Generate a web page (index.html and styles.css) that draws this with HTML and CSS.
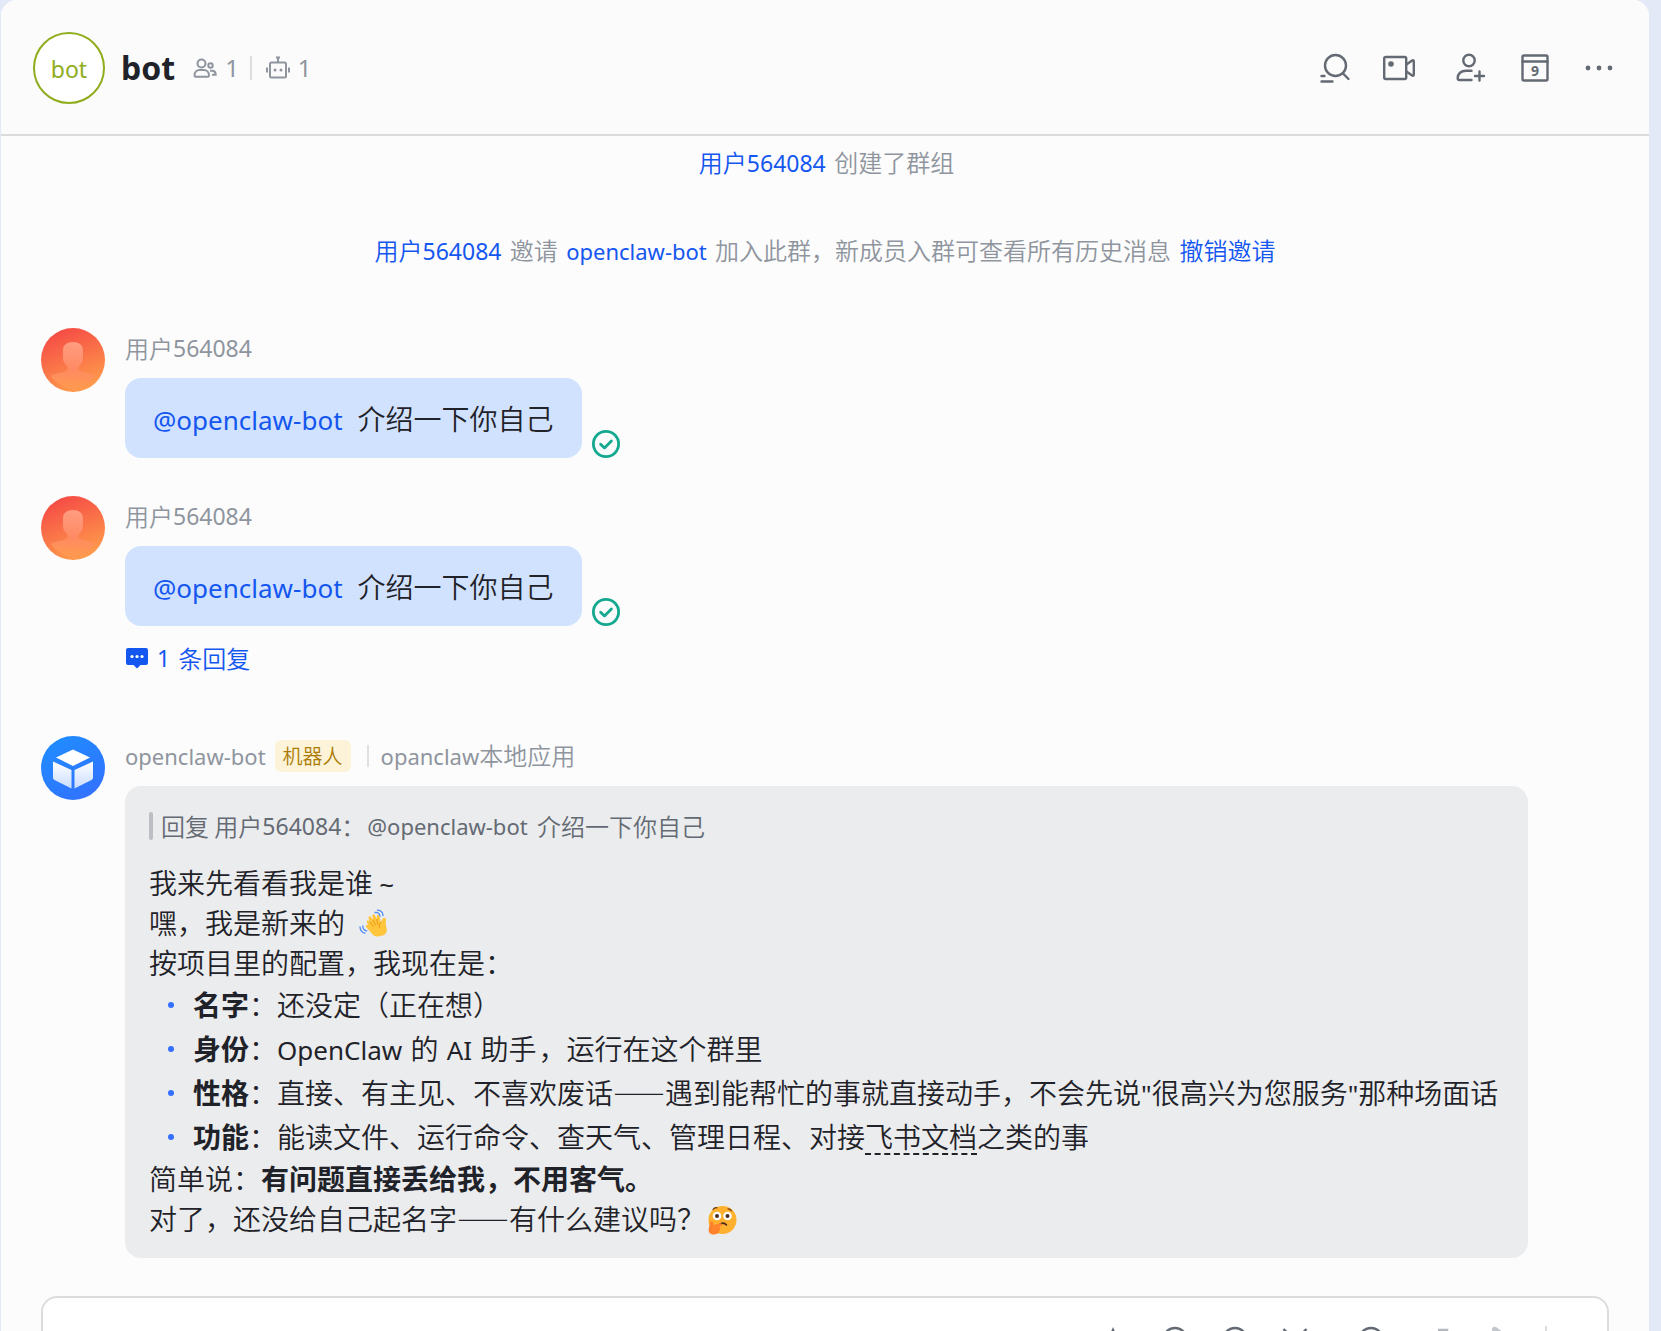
FILE: index.html
```html
<!DOCTYPE html>
<html lang="zh-CN">
<head>
<meta charset="utf-8">
<meta name="viewport" content="width=device-width, initial-scale=1">
<title>bot</title>
<link rel="stylesheet" href="styles.css">
</head>
<body>
<svg class="symbols" aria-hidden="true">
  <defs>
    <linearGradient id="warm" x1="0.3" y1="0" x2="0.7" y2="1">
      <stop offset="0" stop-color="#f54a45"/><stop offset="1" stop-color="#ff9f4c"/>
    </linearGradient>
    <linearGradient id="figure" x1="0" y1="0" x2="0" y2="1">
      <stop offset="0" stop-color="#ff9c80"/><stop offset="0.6" stop-color="#ff8a62"/><stop offset="1" stop-color="#ff9a50"/>
    </linearGradient>
    <linearGradient id="cool" x1="0.2" y1="0" x2="0.8" y2="1">
      <stop offset="0" stop-color="#1f8dff"/><stop offset="1" stop-color="#3370ff"/>
    </linearGradient>
    <linearGradient id="face" x1="0" y1="0" x2="0" y2="1">
      <stop offset="0" stop-color="#fff"/><stop offset="1" stop-color="#c9dcff"/>
    </linearGradient>
  </defs>
  <symbol id="person" viewBox="0 0 64 64">
    <circle cx="32" cy="32" r="32" fill="url(#warm)"/>
    <path fill="url(#figure)" d="M22 22c0-5 4-8 10-8s10 3 10 8v8c0 4-2 6-4 8-1 2-1 4 1 5 5 2 11 2 15 5a27 30 0 0 1-44 0c4-3 10-3 15-5 2-1 2-3 1-5-2-2-4-4-4-8z"/>
  </symbol>
  <symbol id="check" viewBox="0 0 28 28">
    <circle cx="14" cy="14" r="12.6" fill="none" stroke="#14a88f" stroke-width="2.8"/>
    <path d="M8.6 14.2l3.9 3.9 6.9-7" fill="none" stroke="#14a88f" stroke-width="2.8" stroke-linecap="round" stroke-linejoin="round"/>
  </symbol>
</svg>

<main class="panel">
  <header class="header">
    <div class="group-avatar">bot</div>
    <h1 class="title">bot</h1>
    <div class="counts">
      <button class="count" type="button" aria-label="群成员 1">
        <svg width="24" height="24" viewBox="0 0 24 24" fill="none" stroke="#8f959e" stroke-width="2" aria-hidden="true">
          <circle cx="8.5" cy="7.5" r="4"/><path d="M1.5 19.5c0-3.500 2.300-5.500 5-5.500h4.500c2.700 0 5 2 5 5.500 0 .8-.5 1.200-1.200 1.200H2.700c-.7 0-1.200-.4-1.200-1.200z"/>
          <circle cx="17.500" cy="9.500" r="2.200"/><path d="M17 14.700h2c2 0 3.700 1.500 3.700 4H19"/>
        </svg>
        1
      </button>
      <button class="count" type="button" aria-label="机器人 1">
        <svg width="24" height="24" viewBox="0 0 24 24" fill="none" stroke="#8f959e" stroke-width="2" aria-hidden="true">
          <rect x="4" y="6.500" width="16" height="15" rx="1.500"/><path d="M12 6.500V1.500M10 1.500h4M1 11.500v5M23 11.500v5"/>
          <circle cx="9" cy="14" r="1.500" fill="#8f959e" stroke="none"/><circle cx="15" cy="14" r="1.500" fill="#8f959e" stroke="none"/>
        </svg>
        1
      </button>
    </div>
    <nav class="actions" aria-label="群操作">
      <div class="action-group">
        <button class="action" type="button" aria-label="搜索">
          <svg viewBox="0 0 32 32" aria-hidden="true"><circle cx="16.500" cy="13.500" r="10.500"/><path d="M24 21.500l5.500 5.500M2.500 24h3M2.500 29.500H13.500"/></svg>
        </button>
        <button class="action" type="button" aria-label="视频会议">
          <svg viewBox="0 0 32 32" aria-hidden="true"><rect x="1.200" y="5" width="22" height="22" rx="1.500"/><path d="M23.500 12.500l5.500-4q1.800-.8 1.800 1v13q0 1.800-1.800 1l-5.500-4"/><circle cx="8" cy="12" r="2.800" fill="#646a73" stroke="none"/></svg>
        </button>
      </div>
      <div class="action-group">
        <button class="action" type="button" aria-label="添加成员">
          <svg viewBox="0 0 32 32" aria-hidden="true"><circle cx="14" cy="8.500" r="5.700"/><path d="M16.500 18.700H11c-5 0-8.300 3-8.300 7.500 0 1.300.5 1.800 1.700 1.800h12.100M24.500 19.500v9M20 24h9"/></svg>
        </button>
        <button class="action" type="button" aria-label="日历">
          <svg viewBox="0 0 32 32" aria-hidden="true"><rect x="3.500" y="3.500" width="25" height="25" rx="1.500"/><path d="M3.500 9.500h25"/><text x="16" y="24" text-anchor="middle">9</text></svg>
        </button>
        <button class="action" type="button" aria-label="更多">
          <svg viewBox="0 0 32 32" aria-hidden="true"><g fill="#646a73" stroke="none"><circle cx="5" cy="16" r="2.400"/><circle cx="16" cy="16" r="2.400"/><circle cx="27" cy="16" r="2.400"/></g></svg>
        </button>
      </div>
    </nav>
  </header>

  <section class="thread" aria-label="消息">
    <p class="notice"><a href="#user">用户<span class="num">564084</span></a> 创建了群组</p>
    <p class="notice"><a href="#user">用户<span class="num">564084</span></a> 邀请 <a class="latin" href="#bot">openclaw-bot</a> 加入此群，新成员入群可查看所有历史消息 <a href="#undo">撤销邀请</a></p>

    <article class="message">
      <svg class="avatar" aria-hidden="true"><use href="#person"/></svg>
      <div class="content">
        <div class="sender">用户<span class="num">564084</span></div>
        <div class="bubble-row">
          <p class="bubble own"><a class="latin" href="#bot">@openclaw-bot</a>介绍一下你自己</p>
          <svg class="read" role="img" aria-label="已读"><use href="#check"/></svg>
        </div>
      </div>
    </article>

    <article class="message">
      <svg class="avatar" aria-hidden="true"><use href="#person"/></svg>
      <div class="content">
        <div class="sender">用户<span class="num">564084</span></div>
        <div class="bubble-row">
          <p class="bubble own"><a class="latin" href="#bot">@openclaw-bot</a>介绍一下你自己</p>
          <svg class="read" role="img" aria-label="已读"><use href="#check"/></svg>
        </div>
        <a class="replies" href="#replies">
          <svg width="24" height="24" viewBox="0 0 24 24" aria-hidden="true"><path fill="#1456f0" d="M3 2h18q2 0 2 2v13q0 2-2 2h-5.500L12 22.500 8.500 19H3q-2 0-2-2V4q0-2 2-2z"/><g fill="#fff"><circle cx="7" cy="10.500" r="1.600"/><circle cx="12" cy="10.500" r="1.600"/><circle cx="17" cy="10.500" r="1.600"/></g></svg>
          <span class="num">1</span>
          <span>条回复</span>
        </a>
      </div>
    </article>

    <article class="message">
      <svg class="avatar" viewBox="0 0 64 64" aria-hidden="true">
        <circle cx="32" cy="32" r="32" fill="url(#cool)"/>
        <path fill="#fff" d="M32 13.500L49 21.500 32 30 15 21.500z"/>
        <path fill="url(#face)" d="M12 25.500L30.500 34V52.500L13.500 44q-1.500-.8-1.500-2.500zM52 25.500L33.500 34V52.500L50.500 44q1.500-.8 1.500-2.500z"/>
      </svg>
      <div class="content">
        <div class="sender">
          <span class="latin">openclaw-bot</span>
          <span class="tag">机器人</span>
          <span class="origin"><span class="latin">opanclaw</span>本地应用</span>
        </div>
        <div class="bubble reply">
          <blockquote class="quote">回复 用户<span class="num">564084</span>：<span class="latin gap">@openclaw-bot</span> 介绍一下你自己</blockquote>
          <p>我来先看看我是谁 <span class="latin">~</span></p>
          <p>嘿，我是新来的
            <svg class="emoji wave" viewBox="0 0 30 30" role="img" aria-label="挥手">
              <path fill="#ffc53d" d="M8 13.500c-1-1.600.8-3 2.100-1.600l1 1.200-1.500-3.500C8.800 7.500 11 6.500 12 8.200L14 11l-.7-4c-.3-2 2-2.600 2.700-.7l1.700 4 .2-3.300c.1-1.700 2.300-1.700 2.600 0l1.300 6.200 2-3.600c.9-1.500 3.500-1 3.200 1.300-.5 3.700-.2 4.600.6 8.300 1 5-2.600 8-6.600 7.500C15 30 12.500 23 7.500 18.500c-1.600-1.500-.2-3.200 1.500-2.400z"/>
              <path fill="none" stroke="#e8950c" stroke-width=".9" stroke-linecap="round" d="M11.100 13.100l3 4.400M14 11l2.500 5M17.700 10.300l1 5M21.800 13.200c-1.500 2-2 4-1.500 5.500"/>
              <path fill="none" stroke="#4e8cf7" stroke-width="1.300" stroke-linecap="round" d="M16 3.500c2.500-.5 4.500.8 5 3.500M18.500 1.200c3.200.2 5.300 2.300 5.500 5.300M3.800 17c0 3 1.400 4.500 4 4.800M1 18c.3 3.400 2 5.500 5 6.200"/>
            </svg>
          </p>
          <p>按项目里的配置，我现在是：</p>
          <ul>
            <li><b>名字</b>：还没定（正在想）</li>
            <li><b>身份</b>：<span class="latin">OpenClaw</span> <span class="gap">的</span> <span class="latin">AI</span> <span class="gap">助手</span>，运行在这个群里</li>
            <li><b>性格</b>：直接、有主见、不喜欢废话<span class="dash">——</span>遇到能帮忙的事就直接动手，不会先说<span class="latin">"</span>很高兴为您服务<span class="latin">"</span>那种场面话</li>
            <li><b>功能</b>：能读文件、运行命令、查天气、管理日程、对接<a class="term" href="#docs">飞书文档</a>之类的事</li>
          </ul>
          <p>简单说：<b>有问题直接丢给我，不用客气。</b></p>
          <p>对了，还没给自己起名字<span class="dash">——</span>有什么建议吗？<svg class="emoji think" viewBox="0 0 30 30" role="img" aria-label="思考">
              <circle cx="15.500" cy="15" r="14" fill="#ffb02e"/>
              <circle cx="10" cy="11" r="4.300" fill="#fff"/><circle cx="20.500" cy="11" r="4.300" fill="#fff"/>
              <circle cx="10" cy="11" r="2" fill="#4a2b20"/><circle cx="20.500" cy="11" r="2" fill="#4a2b20"/>
              <path fill="none" stroke="#6b3a12" stroke-width="1.200" stroke-linecap="round" d="M6 4.500c1-1.500 2.500-2 4-1.700M21 3.800c1.500 0 2.700.7 3.500 2"/>
              <path fill="none" stroke="#4a2b20" stroke-width="1.600" stroke-linecap="round" d="M12.500 20c2-2.500 5-2.500 7 0"/>
              <path fill="#ff822d" d="M3 17.500c.8-1.700 3-1.500 3.200.5l.3 2 6.500-1.700c2-.5 2.700 1.800 1 2.700l-2 1c1.500.8 1.500 2.500.5 3.500-.5 2.500-2.500 4-6 4-3.700 0-5.200-2.500-4.800-5.500z"/>
            </svg></p>
        </div>
      </div>
    </article>
  </section>

  <form class="composer">
    <textarea class="draft" rows="1" aria-label="消息输入框"></textarea>
    <div class="tools">
      <button type="button" aria-label="格式"><svg viewBox="0 0 28 28"><path d="M3 25L12 4l9 21M7 17h10"/></svg></button>
      <button type="button" aria-label="表情"><svg viewBox="0 0 28 28"><circle cx="14" cy="14" r="12"/><path d="M8 16q6 7 12 0M10 10v1M18 10v1"/></svg></button>
      <button type="button" aria-label="提及"><svg viewBox="0 0 28 28"><circle cx="14" cy="14" r="12"/><circle cx="14" cy="14" r="5"/><path d="M19 9v7q3 4 7-1"/></svg></button>
      <button type="button" aria-label="截图"><svg viewBox="0 0 28 28"><path d="M2.500 3L20 21M25.500 3L8 21"/><circle cx="6" cy="23" r="3"/><circle cx="22" cy="23" r="3"/></svg></button>
      <button class="add" type="button" aria-label="更多"><svg viewBox="0 0 28 28"><circle cx="14" cy="14" r="12"/><path d="M14 8v12M8 14h12"/></svg></button>
      <button class="faint expand" type="button" aria-label="展开"><svg viewBox="0 0 28 28"><path d="M13 4h9v9M11 25H3v-8"/></svg></button>
      <button class="faint" type="submit" aria-label="发送"><svg viewBox="0 0 28 28"><path fill="#c4c7cc" stroke="none" d="M7 4q0-4 4-3l15 11q3 2 0 4L9 27q-4 1-4-2l3-11z"/></svg></button>
      <span class="rule"></span>
      <button class="faint" type="button" aria-label="发送选项"><svg viewBox="0 0 28 28"><path d="M8 12l6 6 6-6"/></svg></button>
    </div>
  </form>
</main>
</body>
</html>
```
FILE: styles.css
```css
* {
  box-sizing: border-box;
}

body {
  margin: 0;
  height: 100vh;
  overflow: hidden;
  padding: 0 12px 0 1px;
  background: #e3e9f7;
  color: #1f2329;
  font: 350 24px/32px "Noto Sans CJK SC", "Noto Sans", sans-serif;
}

h1, p, ul, blockquote {
  margin: 0;
  padding: 0;
}

a {
  color: #1456f0;
  text-decoration: none;
}

b {
  font-weight: 700;
}

button {
  padding: 0;
  border: 0;
  background: none;
  color: inherit;
  font: inherit;
  cursor: pointer;
}

svg {
  flex: none;
}

.symbols {
  position: absolute;
  width: 0;
  height: 0;
}

/* Latin runs sit a step below the Chinese text so both read at one size */
.latin {
  font: 400 22px/1 "Noto Sans", sans-serif;
}

.num {
  font: 400 23px/1 "Noto Sans", sans-serif;
}

.gap {
  margin: 0 2px;
}

.dash {
  font-size: 26px;
  font-weight: 700;
  line-height: 1;
}

.panel {
  height: 100%;
  display: flex;
  flex-direction: column;
  overflow: hidden;
  border-radius: 16px 16px 0 0;
  background: #fcfcfc;
}

.header {
  display: flex;
  flex: none;
  align-items: center;
  padding: 32px 34px 30px 32px;
  border-bottom: 2px solid #dbdbdb;
  background: #fbfbfb;
}

.group-avatar {
  display: grid;
  place-items: center;
  width: 72px;
  height: 72px;
  padding-top: 2px;
  border: 2px solid #8fac1b;
  border-radius: 50%;
  background: #fff;
  color: #8fac1b;
  font: 400 23px/32px "Noto Sans", sans-serif;
}

.title {
  margin-left: 16px;
  font: 700 32px/40px "Noto Sans", sans-serif;
}

.counts {
  display: flex;
  align-items: center;
  margin-left: 18px;
  color: #8f959e;
  font-family: "Noto Sans", sans-serif;
  font-weight: 400;
}

.count {
  display: flex;
  align-items: center;
  gap: 8px;
  line-height: 24px;
}

.count + .count {
  margin-left: 11px;
  padding-left: 14px;
  border-left: 2px solid #dcdcdc;
}

.actions {
  display: flex;
  gap: 40px;
  margin-left: auto;
}

.action-group {
  display: flex;
  gap: 32px;
}

.action svg {
  display: block;
  width: 32px;
  height: 32px;
  fill: none;
  stroke: #646a73;
  stroke-width: 2.4;
  stroke-linecap: round;
}

.action text {
  fill: #646a73;
  stroke: none;
  font: 700 14px "Noto Sans", sans-serif;
}

.thread {
  display: flex;
  flex: none;
  flex-direction: column;
  padding: 10px 40px 38px;
}

.notice {
  margin-bottom: 56px;
  color: #8f959e;
  text-align: center;
}

.notice:nth-of-type(2) {
  margin-bottom: 62px;
}

.notice a {
  margin: 0 3px;
}

.message {
  display: flex;
  gap: 20px;
  margin-bottom: 38px;
}

.message:last-child {
  margin-bottom: 0;
}

.avatar {
  width: 64px;
  height: 64px;
}

.content {
  flex: 1;
  min-width: 0;
}

.sender {
  display: flex;
  align-items: center;
  height: 40px;
  margin-bottom: 10px;
  color: #8f959e;
}

.tag {
  margin-left: 9px;
  padding: 0 8px;
  border-radius: 6px;
  background: #fdf3d8;
  color: #ac7b05;
  font-size: 20px;
}

.origin {
  margin-left: 16px;
  padding-left: 12px;
  border-left: 2px solid #dfe0e3;
  line-height: 20px;
}

.bubble-row {
  display: flex;
  align-items: flex-end;
  gap: 10px;
}

.bubble {
  border-radius: 16px;
  font-size: 28px;
  line-height: 40px;
}

.bubble .latin {
  font-size: 26px;
}

.own {
  padding: 20px 28px;
  background: #d1e2ff;
}

.own a {
  margin-right: 15px;
}

.read {
  width: 28px;
  height: 28px;
  overflow: visible;
}

.replies {
  display: flex;
  align-items: center;
  gap: 8px;
  margin: 16px 0 24px;
}

.reply {
  margin-right: 81px;
  padding: 24px 20px 20px 24px;
  background: #ebecee;
}

.quote {
  display: flex;
  align-items: center;
  margin-bottom: 20px;
  color: #646a73;
  font-size: 24px;
  line-height: 32px;
  white-space: pre;
}

.quote::before {
  content: "";
  width: 4px;
  height: 28px;
  margin-right: 8px;
  border-radius: 2px;
  background: #bbbfc4;
}

.quote .latin {
  margin-right: 4px;
  font-size: 22px;
}

.reply ul {
  list-style: none;
}

.reply li {
  position: relative;
  padding-left: 44px;
  line-height: 44px;
}

.reply li::before {
  content: "";
  position: absolute;
  top: 20px;
  left: 19px;
  width: 6px;
  height: 6px;
  border-radius: 50%;
  background: #3370ff;
}

.term {
  color: inherit;
  text-decoration: underline dashed 2px;
  text-underline-offset: 5px;
}

.emoji {
  width: 30px;
  height: 30px;
  vertical-align: -5px;
}

.wave {
  margin-left: 8px;
}

.think {
  margin-left: 2px;
}

.composer {
  flex: none;
  margin: 0 40px;
  padding: 12px 0 12px 16px;
  display: flex;
  align-items: flex-start;
  border: 2px solid #dcdcdc;
  border-radius: 16px;
  background: #fff;
}

.draft {
  flex: 1;
  height: 64px;
  padding: 12px;
  border: 0;
  outline: 0;
  background: none;
  resize: none;
  font: inherit;
}

.tools {
  display: flex;
  align-items: center;
  gap: 32px;
  padding-top: 16px;
}

.tools svg {
  display: block;
  width: 28px;
  height: 28px;
  fill: none;
  stroke: #646a73;
  stroke-width: 2.4;
}

.tools .add {
  margin-left: 16px;
}

.tools .expand {
  margin-left: 8px;
}

.tools .faint svg {
  stroke: #b5b8bd;
}

.rule {
  width: 2px;
  height: 28px;
  background: #dcdcdc;
}
```
